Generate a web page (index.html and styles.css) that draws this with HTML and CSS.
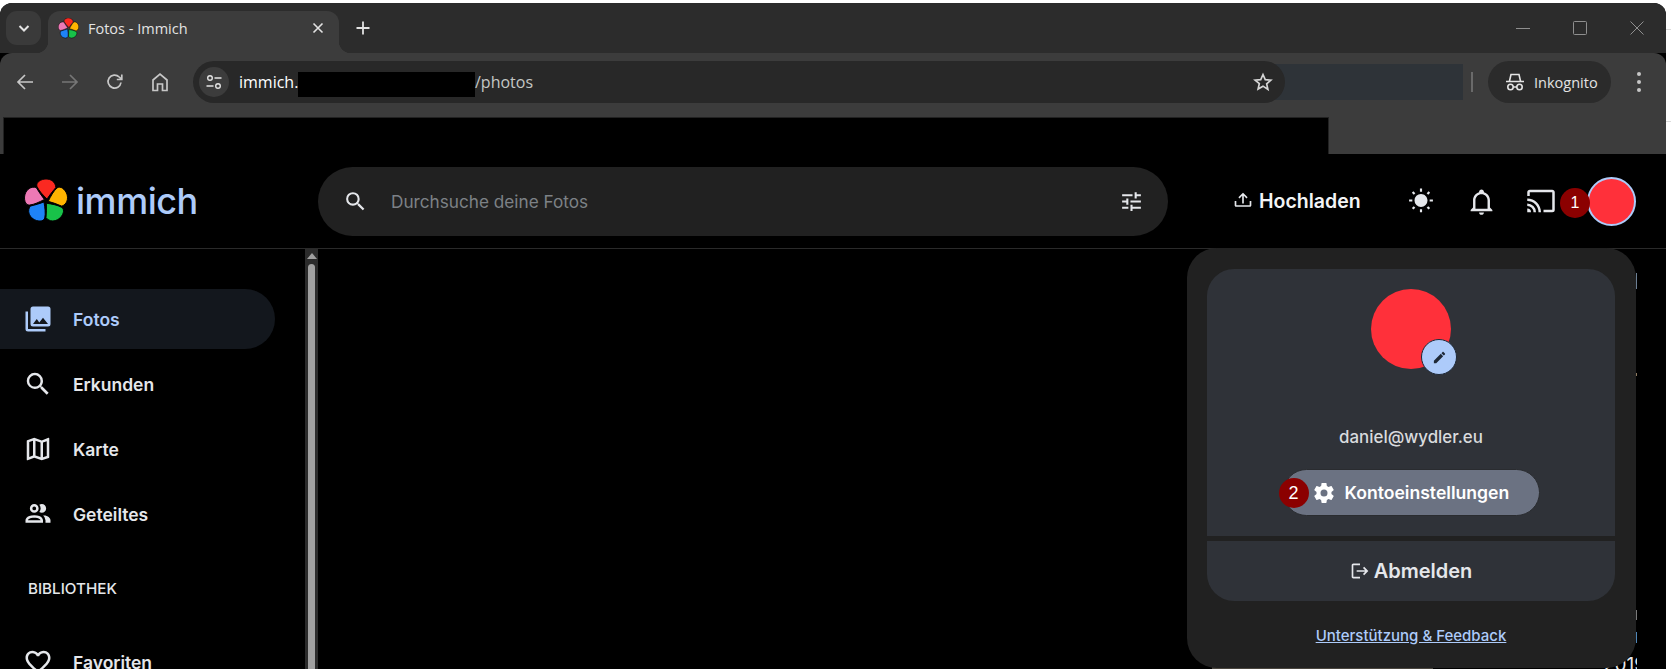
FILE: index.html
```html
<!DOCTYPE html>
<html lang="de">
<head>
  <meta charset="UTF-8" />
  <meta name="viewport" content="width=device-width, initial-scale=1.0" />
  <title>Fotos - Immich</title>
  <link rel="stylesheet" href="styles.css">
</head>
<body>
  <svg class="defs" width="0" height="0">
    <defs>
      <path id="petal" stroke="#000" stroke-width="0.900" d="M1-2C-3-6-7-10-9-14.500C-10.500-18.500-5-22 0-22C5-22 9.500-19 9.800-13.500C6.500-9.500 3.500-6 1-2Z" />
      <symbol id="flower" viewBox="-22 -22 44 44">
        <use href="#petal" fill="#fa2921" />
        <use href="#petal" fill="#ffb400" transform="rotate(72)" />
        <use href="#petal" fill="#18c249" transform="rotate(144)" />
        <use href="#petal" fill="#1e83f7" transform="rotate(216)" />
        <use href="#petal" fill="#ed79b5" transform="rotate(288)" />
      </symbol>
    </defs>
  </svg>

  <div class="window">
    <!-- browser chrome -->
    <div class="tabstrip">
      <div class="tab-search">
        <svg width="14" height="14" viewBox="0 0 14 14"><path d="M2.500 5L7 9.500 11.500 5" fill="none" stroke="#e3e3e3" stroke-width="2" /></svg>
      </div>
      <div class="tab">
        <svg class="favicon" width="21" height="21"><use href="#flower" /></svg>
        <span class="tab-title">Fotos - Immich</span>
        <svg class="tab-close" width="12" height="12" viewBox="0 0 12 12"><path d="M1.500 1.500L10.500 10.500M10.500 1.500L1.500 10.500" stroke="#e3e3e3" stroke-width="1.600" /></svg>
      </div>
      <svg class="tab-new" width="14" height="14" viewBox="0 0 14 14"><path d="M7 0.500V13.500M0.500 7H13.500" stroke="#e3e3e3" stroke-width="1.800" /></svg>
      <div class="win-controls">
        <svg width="14" height="14" viewBox="0 0 14 14"><path d="M0 7.500H14" stroke="#8f8f8f" /></svg>
        <svg width="14" height="14" viewBox="0 0 14 14"><rect x="0.500" y="0.500" width="13" height="13" rx="1" fill="none" stroke="#8f8f8f" /></svg>
        <svg width="14" height="14" viewBox="0 0 14 14"><path d="M0.500 0.500L13.500 13.500M13.500 0.500L0.500 13.500" stroke="#8f8f8f" /></svg>
      </div>
    </div>

    <div class="toolbar">
      <div class="toolbar-row">
        <div class="nav-btn"><svg width="18" height="18" viewBox="0 0 18 18"><path d="M17 9H2M9 2L2 9l7 7" fill="none" stroke="#c7c7c7" stroke-width="1.700" /></svg></div>
        <div class="nav-btn"><svg width="18" height="18" viewBox="0 0 18 18"><path d="M1 9H16M9 2l7 7-7 7" fill="none" stroke="#767676" stroke-width="1.700" /></svg></div>
        <div class="nav-btn"><svg width="18" height="18" viewBox="0 0 18 18"><path d="M15 9.500A6.500 6.500 0 1 1 13.200 4L15.500 6.200M15.800 1.500V6.500H10.800" fill="none" stroke="#c7c7c7" stroke-width="1.700" /></svg></div>
        <div class="nav-btn"><svg width="18" height="20" viewBox="0 0 18 20"><path d="M2 18.500V8L9 2l7 6V18.500H11.500V12H6.500V18.500Z" fill="none" stroke="#c7c7c7" stroke-width="1.700" /></svg></div>
        <div class="omnibox">
          <div class="site-chip">
            <svg width="16" height="16" viewBox="0 0 16 16"><circle cx="4" cy="4" r="2.300" fill="none" stroke="#e3e3e3" stroke-width="1.400" /><path d="M8.500 4H15.500M0.500 12H7.500" stroke="#e3e3e3" stroke-width="1.400" /><circle cx="12" cy="12" r="2.300" fill="none" stroke="#e3e3e3" stroke-width="1.400" /></svg>
          </div>
          <span class="url url-host">immich.</span>
          <span class="redact-url"></span>
          <span class="url url-path">/photos</span>
          <svg class="star" width="20" height="20" viewBox="0 0 24 24"><path d="M12 3l2.700 6.200 6.800.6-5.100 4.500 1.500 6.700L12 17l-5.900 3.500 1.500-6.700L2.500 9.800l6.800-.6Z" fill="none" stroke="#d5d5d5" stroke-width="2" /></svg>
        </div>
        <div class="ext-block"></div>
        <div class="tb-sep"></div>
        <div class="incognito">
          <svg width="20" height="18" viewBox="0 0 20 18"><path d="M4.500 8L6 1.500H14L15.500 8M1 8.500H19" fill="none" stroke="#e3e3e3" stroke-width="1.600" /><circle cx="5.500" cy="14" r="2.700" fill="none" stroke="#e3e3e3" stroke-width="1.600" /><circle cx="14.500" cy="14" r="2.700" fill="none" stroke="#e3e3e3" stroke-width="1.600" /><path d="M8 14h4" stroke="#e3e3e3" stroke-width="1.600" /></svg>
          <span>Inkognito</span>
        </div>
        <div class="kebab"><i></i><i></i><i></i></div>
      </div>
      <div class="bookmarks-redact"></div>
    </div>

    <!-- immich -->
    <div class="app">
      <header class="header">
        <div class="logo">
          <svg width="44" height="44"><use href="#flower" /></svg>
          <span class="logo-text">immich</span>
        </div>
        <div class="search">
          <svg class="search-icon" width="25" height="25" viewBox="0 0 24 24"><path fill="#e5e7eb" d="M9.500,3A6.500,6.500 0 0,1 16,9.500C16,11.110 15.410,12.590 14.440,13.730L14.710,14H15.500L20.500,19L19,20.500L14,15.500V14.710L13.730,14.440C12.590,15.410 11.110,16 9.500,16A6.500,6.500 0 0,1 3,9.500A6.500,6.500 0 0,1 9.500,3M9.500,5C7,5 5,7 5,9.500C5,12 7,14 9.500,14C12,14 14,12 14,9.500C14,7 12,5 9.500,5Z" /></svg>
          <span class="search-text">Durchsuche deine Fotos</span>
          <svg class="search-tune" width="25" height="25" viewBox="0 0 24 24"><path fill="#e5e7eb" d="M3,17V19H9V17H3M3,5V7H13V5H3M13,21V19H21V17H13V15H11V21H13M7,9V11H3V13H7V15H9V9H7M21,13V11H11V13H21M15,9H17V7H21V5H17V3H15V9Z" /></svg>
        </div>
        <div class="upload">
          <svg width="20" height="20" viewBox="0 0 24 24"><path fill="#e5e7eb" d="M2 12H4V17H20V12H22V17C22 18.110 21.110 19 20 19H4C2.900 19 2 18.110 2 17V12M12 2L6.460 7.460L7.880 8.880L11 5.750V15H13V5.750L16.130 8.890L17.550 7.450L12 2Z" /></svg>
          <span>Hochladen</span>
        </div>
        <div class="icon-btn"><svg width="26" height="26" viewBox="0 0 24 24"><path fill="#e5e7eb" d="M3.550 18.540L4.960 19.950L6.760 18.160L5.340 16.740M11 22.450H13V19.500H11M12 5.500A6 6 0 0 0 6 11.500A6 6 0 0 0 12 17.500A6 6 0 0 0 18 11.500C18 8.180 15.310 5.500 12 5.500M20 12.500H23V10.500H20M17.240 18.160L19.040 19.950L20.450 18.540L18.660 16.740M20.450 4.460L19.040 3.050L17.240 4.840L18.660 6.260M13 .550H11V3.500H13M4 10.500H1V12.500H4M6.760 4.840L4.960 3.050L3.550 4.460L5.340 6.260L6.760 4.840Z" /></svg></div>
        <div class="icon-btn"><svg width="29" height="29" viewBox="0 0 24 24"><path fill="#e5e7eb" d="M10 21H14C14 22.100 13.100 23 12 23S10 22.100 10 21M21 19V20H3V19L5 17V11C5 7.900 7 5.200 10 4.300V4C10 2.900 10.900 2 12 2S14 2.900 14 4V4.300C17 5.200 19 7.900 19 11V17L21 19M17 11C17 8.200 14.800 6 12 6S7 8.200 7 11V18H17V11Z" /></svg></div>
        <div class="icon-btn"><svg width="30" height="30" viewBox="0 0 24 24"><path fill="#e5e7eb" d="M1,10V12A9,9 0 0,1 10,21H12C12,14.920 7.070,10 1,10M1,14V16A5,5 0 0,1 6,21H8A7,7 0 0,0 1,14M1,18V21H4A3,3 0 0,0 1,18M21,3H3C1.890,3 1,3.890 1,5V8H3V5H21V19H14V21H21A2,2 0 0,0 23,19V5C23,3.890 22.100,3 21,3Z" /></svg></div>
        <div class="avatar-small">
          <span class="badge badge-one">1</span>
        </div>
      </header>

      <div class="main">
        <aside class="sidebar">
          <a class="nav-item active">
            <svg width="30" height="30" viewBox="0 0 24 24"><path fill="#adcbfa" d="M22,16V4A2,2 0 0,0 20,2H8A2,2 0 0,0 6,4V16A2,2 0 0,0 8,18H20A2,2 0 0,0 22,16M11,12L13.030,14.710L16,11L20,16H8M2,6V20A2,2 0 0,0 4,22H18V20H4V6" /></svg>
            <span>Fotos</span>
          </a>
          <a class="nav-item">
            <svg width="30" height="30" viewBox="0 0 24 24"><path fill="#e5e7eb" d="M9.500,3A6.500,6.500 0 0,1 16,9.500C16,11.110 15.410,12.590 14.440,13.730L14.710,14H15.500L20.500,19L19,20.500L14,15.500V14.710L13.730,14.440C12.590,15.410 11.110,16 9.500,16A6.500,6.500 0 0,1 3,9.500A6.500,6.500 0 0,1 9.500,3M9.500,5C7,5 5,7 5,9.500C5,12 7,14 9.500,14C12,14 14,12 14,9.500C14,7 12,5 9.500,5Z" /></svg>
            <span>Erkunden</span>
          </a>
          <a class="nav-item">
            <svg width="30" height="30" viewBox="0 0 24 24"><path fill="#e5e7eb" d="M20.500,3L20.340,3.030L15,5.100L9,3L3.360,4.900C3.150,4.970 3,5.150 3,5.380V20.500A0.500,0.500 0 0,0 3.500,21L3.660,20.970L9,18.900L15,21L20.640,19.100C20.850,19.030 21,18.850 21,18.620V3.500A0.500,0.500 0 0,0 20.500,3M10,5.470L14,6.870V18.530L10,17.130V5.470M5,6.460L8,5.450V17.150L5,18.310V6.460M19,17.540L16,18.550V6.860L19,5.700V17.540Z" /></svg>
            <span>Karte</span>
          </a>
          <a class="nav-item">
            <svg width="30" height="30" viewBox="0 0 24 24"><path fill="#e5e7eb" d="M13.070 10.410A5 5 0 0 0 13.070 4.590A3.390 3.390 0 0 1 15 4A3.500 3.500 0 0 1 15 11A3.390 3.390 0 0 1 13.070 10.410M5.500 7.500A3.500 3.500 0 1 1 9 11A3.500 3.500 0 0 1 5.500 7.500M7.500 7.500A1.500 1.500 0 1 0 9 6A1.500 1.500 0 0 0 7.500 7.500M16 17V19H2V17S2 13 9 13 16 17 16 17M14 17C13.860 16.220 12.670 15 9 15S4.070 16.310 4 17M15.950 13A5.320 5.320 0 0 1 18 17V19H22V17S22 13.370 15.940 13Z" /></svg>
            <span>Geteiltes</span>
          </a>
          <div class="nav-heading">BIBLIOTHEK</div>
          <a class="nav-item">
            <svg width="30" height="30" viewBox="0 0 24 24"><path fill="#e5e7eb" d="M12.100,18.550L12,18.650L11.890,18.550C7.140,14.240 4,11.390 4,8.500C4,6.500 5.500,5 7.500,5C9.040,5 10.540,6 11.070,7.360H12.930C13.460,6 14.960,5 16.500,5C18.500,5 20,6.500 20,8.500C20,11.390 16.860,14.240 12.100,18.550M16.500,3C14.760,3 13.090,3.810 12,5.080C10.910,3.810 9.240,3 7.500,3C4.420,3 2,5.410 2,8.500C2,12.270 5.400,15.360 10.550,20.030L12,21.350L13.450,20.030C18.600,15.360 22,12.270 22,8.500C22,5.410 19.580,3 16.500,3Z" /></svg>
            <span>Favoriten</span>
          </a>
        </aside>
        <div class="scrollbar">
          <div class="scroll-arrow"></div>
          <div class="scroll-thumb"></div>
        </div>
        <div class="content">
          <div class="behind-photo"></div>
          <div class="behind-marks"></div>
          <div class="behind-year">2019</div>
        </div>
      </div>

      <!-- account menu -->
      <div class="account-menu">
        <div class="account-card">
          <div class="account-top">
            <div class="avatar-big">
              <span class="avatar-edit">
                <svg width="15" height="15" viewBox="0 0 24 24"><path fill="#1f2937" d="M20.710,7.040C21.100,6.650 21.100,6 20.710,5.630L18.370,3.290C18,2.900 17.350,2.900 16.960,3.290L15.120,5.120L18.870,8.870M3,17.250V21H6.750L17.810,9.930L14.060,6.180L3,17.250Z" /></svg>
              </span>
            </div>
            <div class="account-mail">daniel@wydler.eu</div>
            <div class="account-settings">
              <span class="badge badge-two">2</span>
              <svg width="24" height="24" viewBox="0 0 24 24"><path fill="#fff" d="M12,15.500A3.500,3.500 0 0,1 8.500,12A3.500,3.500 0 0,1 12,8.500A3.500,3.500 0 0,1 15.500,12A3.500,3.500 0 0,1 12,15.500M19.430,12.970C19.470,12.650 19.500,12.330 19.500,12C19.500,11.670 19.470,11.340 19.430,11L21.540,9.370C21.730,9.220 21.780,8.950 21.660,8.730L19.660,5.270C19.540,5.050 19.270,4.960 19.050,5.050L16.560,6.050C16.040,5.660 15.500,5.320 14.870,5.070L14.500,2.420C14.460,2.180 14.250,2 14,2H10C9.750,2 9.540,2.180 9.500,2.420L9.130,5.070C8.500,5.320 7.960,5.660 7.440,6.050L4.950,5.050C4.730,4.960 4.460,5.050 4.340,5.270L2.340,8.730C2.210,8.950 2.270,9.220 2.460,9.370L4.570,11C4.530,11.340 4.500,11.670 4.500,12C4.500,12.330 4.530,12.650 4.570,12.970L2.460,14.630C2.270,14.780 2.210,15.050 2.340,15.270L4.340,18.730C4.460,18.950 4.730,19.030 4.950,18.950L7.440,17.940C7.960,18.340 8.500,18.680 9.130,18.930L9.500,21.580C9.540,21.820 9.750,22 10,22H14C14.250,22 14.460,21.820 14.500,21.580L14.870,18.930C15.500,18.670 16.040,18.340 16.560,17.940L19.050,18.950C19.270,19.030 19.540,18.950 19.660,18.730L21.660,15.270C21.780,15.050 21.730,14.780 21.540,14.630L19.430,12.970Z" /></svg>
              <span>Kontoeinstellungen</span>
            </div>
          </div>
          <div class="account-logout">
            <svg width="20" height="20" viewBox="0 0 24 24"><path fill="#e5e7eb" d="M17 7L15.590 8.410L18.170 11H8V13H18.170L15.590 15.580L17 17L22 12M4 5H12V3H4C2.900 3 2 3.900 2 5V19C2 20.100 2.900 21 4 21H12V19H4V5Z" /></svg>
            <span>Abmelden</span>
          </div>
        </div>
        <a class="account-link">Unterstützung &amp; Feedback</a>
      </div>
    </div>
  </div>
  <div class="page-edge"></div>
</body>
</html>
```
FILE: styles.css
```css
html, body {
  margin: 0;
  height: 669px;
  overflow: hidden;
}
body {
  background: #fff;
  display: flex;
  font-family: Inter, "Noto Sans", sans-serif;
}
.defs {
  position: absolute;
}
svg {
  display: block;
  flex: none;
}

.window {
  width: 1666px;
  height: 666px;
  margin-top: 3px;
  background: #000;
  border-radius: 12px 12px 0 0;
  overflow: hidden;
  display: flex;
  flex-direction: column;
}
.page-edge {
  flex: 1;
  background:
    linear-gradient(#dcdcdc, #dcdcdc) 0 29px / 100% 1px no-repeat,
    linear-gradient(#dcdcdc, #dcdcdc) 0 121px / 100% 1px no-repeat;
}

/* browser chrome */
.tabstrip {
  height: 42px;
  padding-top: 8px;
  background: #2c2c2c;
  display: flex;
  align-items: flex-start;
}
.tab-search {
  width: 35px;
  height: 34px;
  margin-left: 6px;
  background: #3a3a3a;
  border-radius: 11px;
  display: flex;
  align-items: center;
  justify-content: center;
}
.tab {
  position: relative;
  width: 291px;
  height: 42px;
  margin-left: 7px;
  background: #3c3c3c;
  border-radius: 12px 12px 0 0;
  display: flex;
  align-items: center;
  padding-bottom: 8px;
  box-sizing: border-box;
  color: #e3e3e3;
}
.tab::after {
  content: "";
  position: absolute;
  right: -12px;
  bottom: 0;
  width: 12px;
  height: 12px;
  background: radial-gradient(circle at 100% 0, transparent 12px, #3c3c3c 12.500px);
}
.tab::before {
  content: "";
  position: absolute;
  left: -12px;
  bottom: 0;
  width: 12px;
  height: 12px;
  background: radial-gradient(circle at 0 0, transparent 12px, #3c3c3c 12.500px);
}
.favicon {
  margin-left: 10px;
}
.tab-title {
  margin-left: 9px;
  font-family: "Open Sans", sans-serif;
  font-size: 14.500px;
}
.tab-close {
  margin-left: auto;
  margin-right: 15px;
}
.tab-new {
  margin: 10px 0 0 17px;
}
.win-controls {
  margin-left: auto;
  margin-right: 22px;
  margin-top: 10px;
  display: flex;
  gap: 43px;
}

.toolbar {
  height: 101px;
  background: #3c3c3c;
  border-radius: 12px 12px 0 0;
  padding-top: 8px;
  box-sizing: border-box;
}
.toolbar-row {
  height: 42px;
  padding-left: 2px;
  display: flex;
  align-items: center;
}
.nav-btn {
  width: 45px;
  height: 42px;
  display: flex;
  align-items: center;
  justify-content: center;
}
.omnibox {
  width: 1092px;
  height: 42px;
  margin-left: 11px;
  background: #282828;
  border-radius: 21px;
  display: flex;
  align-items: center;
  position: relative;
  z-index: 1;
  color: #e8e8e8;
  box-sizing: border-box;
}
.site-chip {
  width: 30px;
  height: 30px;
  margin-left: 6px;
  background: #3c3c3c;
  border-radius: 50%;
  display: flex;
  align-items: center;
  justify-content: center;
}
.url {
  font-family: "Open Sans", sans-serif;
  font-size: 16px;
}
.url-host {
  margin-left: 10px;
  width: 59px;
  color: #fff;
}
.redact-url {
  width: 177px;
  height: 25px;
  margin-top: 4px;
  background: #000;
}
.url-path {
  color: #c4c7c5;
}
.star {
  margin-left: auto;
  margin-right: 12px;
}
.ext-block {
  width: 199px;
  height: 36px;
  margin-left: -21px;
  background: #2e3338;
}
.tb-sep {
  width: 2px;
  height: 20px;
  margin-left: 8px;
  background: #6a6a6a;
}
.incognito {
  width: 123px;
  height: 42px;
  margin-left: 15px;
  background: #2b2b2b;
  border-radius: 21px;
  display: flex;
  align-items: center;
  padding-left: 17px;
  box-sizing: border-box;
  gap: 9px;
  color: #e3e3e3;
  font-family: "Open Sans", sans-serif;
  font-size: 14.500px;
}
.kebab {
  margin-left: 26px;
  display: flex;
  flex-direction: column;
  gap: 4px;
}
.kebab i {
  width: 4px;
  height: 4px;
  border-radius: 50%;
  background: #c7c7c7;
}
.bookmarks-redact {
  width: 1326px;
  height: 37px;
  margin: 14px 0 0 3px;
  background: #000;
  border: 1px solid #222;
  border-bottom: none;
  box-sizing: border-box;
}

/* immich app */
.app {
  position: relative;
  flex: 1;
  min-height: 0;
  color: #e5e7eb;
}
.header {
  height: 95px;
  box-sizing: border-box;
  border-bottom: 1px solid #2a2a2a;
  display: flex;
  align-items: center;
}
.logo {
  width: 318px;
  padding-left: 24px;
  box-sizing: border-box;
  display: flex;
  align-items: center;
  gap: 8px;
}
.logo-text {
  font-size: 36px;
  font-weight: 500;
  letter-spacing: -0.450px;
  color: #adcbfa;
  line-height: 1;
}
.search {
  width: 850px;
  height: 69px;
  background: #212121;
  border-radius: 35px;
  display: flex;
  align-items: center;
}
.search-icon {
  margin-left: 25px;
}
.search-text {
  margin-left: 23px;
  font-size: 17.200px;
  color: #7d8186;
}
.search-tune {
  margin-left: auto;
  margin-right: 24px;
}
.upload {
  width: 130px;
  margin: 0 28px 0 65px;
  display: flex;
  align-items: center;
  gap: 6px;
  font-size: 19.500px;
  font-weight: 600;
  color: #f3f4f6;
  white-space: nowrap;
}
.icon-btn {
  width: 60px;
  height: 60px;
  display: flex;
  align-items: center;
  justify-content: center;
}
.avatar-small {
  position: relative;
  width: 45px;
  height: 45px;
  margin-left: 16px;
  background: #ff303a;
  border: 2px solid #adcbfa;
  border-radius: 50%;
}
.badge {
  position: absolute;
  width: 30px;
  height: 30px;
  background: #8b0000;
  border-radius: 50%;
  color: #fff;
  font-family: "Liberation Sans", Arial, sans-serif;
  font-weight: 400;
  font-size: 18px;
  display: flex;
  align-items: center;
  justify-content: center;
}
.badge-one {
  left: -29px;
  top: 9px;
  font-size: 16px;
}
.badge-two {
  left: -5px;
  top: 8px;
}

.main {
  display: flex;
  height: 420px;
}
.sidebar {
  width: 305px;
  padding-top: 40px;
  box-sizing: border-box;
  display: flex;
  flex-direction: column;
}
.nav-item {
  width: 275px;
  height: 60px;
  flex: none;
  box-sizing: border-box;
  padding-left: 23px;
  margin-bottom: 5px;
  border-radius: 0 30px 30px 0;
  display: flex;
  align-items: center;
  gap: 20px;
  font-size: 17.500px;
  font-weight: 600;
  color: #e5e7eb;
}
.nav-item.active {
  background: #13171d;
  color: #adcbfa;
}
.nav-heading {
  margin: 30px 0 33px 28px;
  height: 20px;
  line-height: 20px;
  font-size: 15.200px;
  font-weight: 500;
  color: #e5e7eb;
}
.scrollbar {
  width: 13px;
  background: #2b2b2b;
  display: flex;
  flex-direction: column;
  align-items: center;
}
.scroll-arrow {
  margin-top: 4px;
  width: 0;
  height: 0;
  border-left: 5px solid transparent;
  border-right: 5px solid transparent;
  border-bottom: 6px solid #a0a0a0;
}
.scroll-thumb {
  width: 7px;
  flex: 1;
  margin-top: 5px;
  background: #a0a0a0;
  border-radius: 4px 4px 0 0;
}
.content {
  flex: 1;
  position: relative;
}
/* timeline peeking out under the menu */
.behind-photo {
  position: absolute;
  left: 894px;
  bottom: 0;
  width: 221px;
  height: 3px;
  background: #4a463f;
}
.behind-marks {
  position: absolute;
  left: 1318px;
  top: 24px;
  width: 1px;
  height: 370px;
  background: linear-gradient(#6c7f94 0 16px, transparent 16px 100px, #8f7a60 100px 103px, transparent 103px 337px, #7a7a7a 337px 347px, transparent 347px 359px, #4f86b8 359px);
}
.behind-year {
  position: absolute;
  left: 1285px;
  top: 404px;
  width: 34px;
  overflow: hidden;
  white-space: nowrap;
  font-size: 19px;
  color: #e5e7eb;
}

.account-menu {
  position: absolute;
  right: 30px;
  top: 94px;
  width: 449px;
  height: 420px;
  box-sizing: border-box;
  padding: 21px 21px 0 20px;
  background: #212121;
  border-radius: 30px;
}
.account-card {
  display: flex;
  flex-direction: column;
  gap: 5px;
}
.account-top {
  height: 267px;
  background: #2f3238;
  border-radius: 27px 27px 0 0;
  display: flex;
  flex-direction: column;
  align-items: center;
}
.avatar-big {
  position: relative;
  width: 80px;
  height: 80px;
  margin-top: 20px;
  background: #ff303a;
  border-radius: 50%;
}
.avatar-edit {
  position: absolute;
  left: 50px;
  top: 50px;
  width: 36px;
  height: 36px;
  box-sizing: border-box;
  background: #adcbfa;
  border: 1px solid #1f2937;
  border-radius: 50%;
  display: flex;
  align-items: center;
  justify-content: center;
}
.account-mail {
  margin-top: 58px;
  height: 20px;
  line-height: 20px;
  font-size: 16.900px;
  font-weight: 500;
  color: #d9dbde;
}
.account-settings {
  position: relative;
  margin-top: 22px;
  width: 257px;
  height: 47px;
  box-sizing: border-box;
  padding-left: 28px;
  background: #6b7282;
  border: 1px solid #2a2c30;
  border-radius: 24px;
  display: flex;
  align-items: center;
  gap: 9px;
  font-size: 17.600px;
  font-weight: 600;
  color: #fff;
}
.account-logout {
  height: 60px;
  background: #2f3238;
  border-radius: 0 0 27px 27px;
  display: flex;
  align-items: center;
  justify-content: center;
  gap: 4px;
  font-size: 20px;
  font-weight: 600;
  color: #e5e7eb;
}
.account-link {
  display: block;
  margin-top: 25px;
  text-align: center;
  font-size: 15px;
  font-weight: 500;
  color: #adcbfa;
  text-decoration: underline;
}
```
